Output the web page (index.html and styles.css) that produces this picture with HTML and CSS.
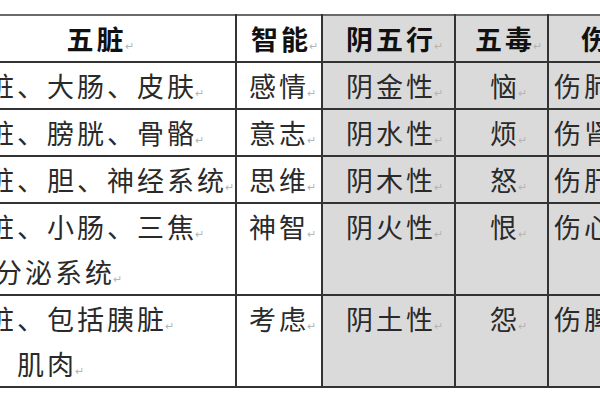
FILE: index.html
```html
<!DOCTYPE html>
<html lang="zh">
<head>
<meta charset="utf-8">
<link rel="stylesheet" href="styles.css">
</head>
<body>
<div class="page">
<table class="grid">
  <colgroup>
    <col class="c1"><col class="c2"><col class="c3"><col class="c4"><col class="c5">
  </colgroup>
  <thead>
    <tr>
      <th class="organ-h">五脏<span class="pm">↵</span></th>
      <th class="wis-h">智能<span class="pm">↵</span></th>
      <th class="yin shade">阴五行<span class="pm">↵</span></th>
      <th class="poison shade">五毒<span class="pm">↵</span></th>
      <th class="hurt-h shade">伤脏<span class="pm">↵</span></th>
    </tr>
  </thead>
  <tbody>
    <tr>
      <td class="organ">肺脏、大肠、皮肤<span class="pm">↵</span></td>
      <td class="wis">感情<span class="pm">↵</span></td>
      <td class="yin shade">阴金性<span class="pm">↵</span></td>
      <td class="poison shade">恼<span class="pm">↵</span></td>
      <td class="hurt shade">伤肺<span class="pm">↵</span></td>
    </tr>
    <tr>
      <td class="organ">肾脏、膀胱、骨骼<span class="pm">↵</span></td>
      <td class="wis">意志<span class="pm">↵</span></td>
      <td class="yin shade">阴水性<span class="pm">↵</span></td>
      <td class="poison shade">烦<span class="pm">↵</span></td>
      <td class="hurt shade">伤肾<span class="pm">↵</span></td>
    </tr>
    <tr>
      <td class="organ">肝脏、胆、神经系统<span class="pm">↵</span></td>
      <td class="wis">思维<span class="pm">↵</span></td>
      <td class="yin shade">阴木性<span class="pm">↵</span></td>
      <td class="poison shade">怒<span class="pm">↵</span></td>
      <td class="hurt shade">伤肝<span class="pm">↵</span></td>
    </tr>
    <tr class="tall">
      <td class="organ">心脏、小肠、三焦<span class="pm">↵</span><br><span class="indent">内分泌系统<span class="pm">↵</span></span></td>
      <td class="wis">神智<span class="pm">↵</span></td>
      <td class="yin shade">阴火性<span class="pm">↵</span></td>
      <td class="poison shade">恨<span class="pm">↵</span></td>
      <td class="hurt shade">伤心<span class="pm">↵</span></td>
    </tr>
    <tr class="tall">
      <td class="organ">脾脏、包括胰脏<span class="pm">↵</span><br>肢、肌肉<span class="pm">↵</span></td>
      <td class="wis">考虑<span class="pm">↵</span></td>
      <td class="yin shade">阴土性<span class="pm">↵</span></td>
      <td class="poison shade">怨<span class="pm">↵</span></td>
      <td class="hurt shade">伤脾<span class="pm">↵</span></td>
    </tr>
  </tbody>
</table>
</div>
</body>
</html>
```

FILE: styles.css
```css
html, body {
  margin: 0;
  padding: 0;
  background: #ffffff;
}
.page {
  width: 600px;
  height: 400px;
  overflow: hidden;
  padding-top: 14px;
  box-sizing: border-box;
}
.grid {
  border-collapse: collapse;
  table-layout: fixed;
  width: 717px;
  margin-left: -51px;
  font-family: "Noto Sans CJK SC", "Noto Sans CJK JP", sans-serif;
  font-size: 27px;
  letter-spacing: 3px;
  color: #2a2a2a;
  border-top: 2px solid #6a6a6a;
  border-bottom: 2px solid #333;
}
.c1 { width: 286px; }
.c2 { width: 86px; }
.c3 { width: 133px; }
.c4 { width: 93px; }
.c5 { width: 119px; }
.grid th, .grid td {
  border: 2px solid #333;
  padding: 0;
  line-height: 45px;
  height: 45px;
  vertical-align: top;
  white-space: nowrap;
  overflow: hidden;
  text-align: left;
}
.grid th {
  font-weight: 700;
  color: #111;
}
.grid thead th { border-top: 2px solid #6a6a6a; }
.grid tr.tall td { height: 90px; }
.shade { background: #dadada; }
.organ-h { text-align: center !important; padding-left: 14px !important; }
.organ { padding-left: 6px !important; }
.indent { padding-left: 8px; }
.wis-h { padding-left: 14px !important; }
.wis { padding-left: 12px !important; }
.yin { padding-left: 23px !important; }
.poison { text-align: center !important; padding-left: 14px !important; }
.hurt-h { padding-left: 32px !important; }
.hurt { padding-left: 5px !important; }
.pm {
  font-family: "Noto Sans CJK SC", sans-serif;
  font-size: 11px;
  line-height: 1;
  font-weight: 400;
  letter-spacing: 0;
  color: #b5b5b5;
  margin-left: -2px;
  vertical-align: baseline;
}
```
